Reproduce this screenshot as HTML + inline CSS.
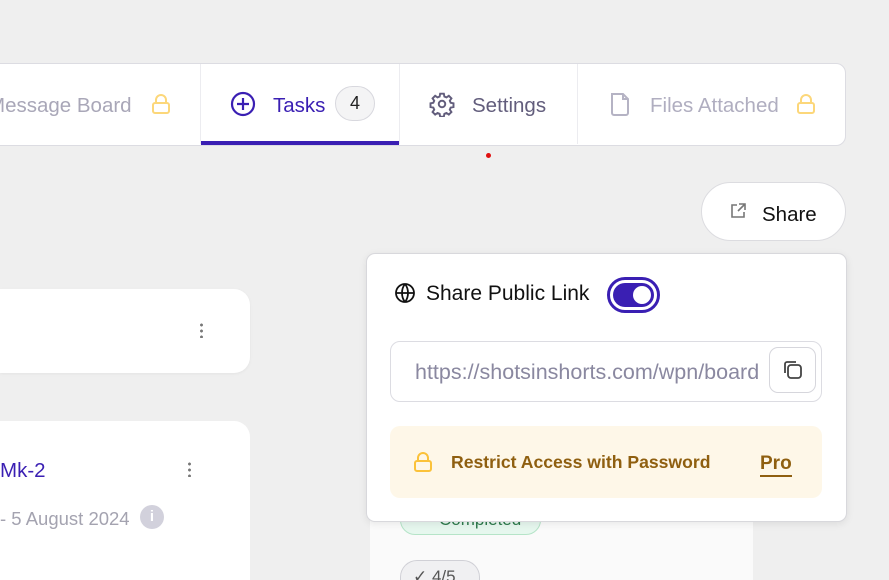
<!DOCTYPE html>
<html><head><style>
*{box-sizing:border-box;margin:0;padding:0}
html,body{width:889px;height:580px;overflow:hidden}
body{background:#efefef;font-family:"Liberation Sans",sans-serif;position:relative}
.abs{position:absolute}
.tabs{left:-20px;top:63px;width:866px;height:83px;background:#fff;border:1px solid #dcdce2;border-radius:10px}
.div{top:64px;width:1px;height:80px;background:#ececf0}
.t{font-size:20.5px;top:94px;white-space:nowrap}
</style></head><body>
<div class="abs tabs"></div>
<div class="abs div" style="left:200px"></div>
<div class="abs div" style="left:399px"></div>
<div class="abs div" style="left:577px"></div>
<div class="abs" style="left:201px;top:141px;width:198px;height:4px;background:#3a1fb3"></div>
<div class="abs t" style="left:-12px;color:#a9a7b8">Message Board</div>
<svg class="abs" style="left:150px;top:93px" width="22" height="22" viewBox="0 0 22 22" fill="none" stroke="#fcd77a" stroke-width="2"><rect x="3" y="10" width="16" height="10" rx="2"/><path d="M6 10V7a5 5 0 0 1 10 0v3"/></svg>
<svg class="abs" style="left:230px;top:91px" width="26" height="26" viewBox="0 0 26 26" fill="none" stroke="#3a1fb3" stroke-width="2.2"><circle cx="13" cy="13" r="11"/><path d="M13 7v12M7 13h12"/></svg>
<div class="abs t" style="left:273px;color:#3a1fb3">Tasks</div>
<div class="abs" style="left:335px;top:86px;width:40px;height:35px;border-radius:18px;background:#f4f4f5;border:1px solid #d8d8de;font-size:18px;text-align:center;line-height:33px;color:#222">4</div>
<svg class="abs" style="left:429px;top:91px" width="26" height="26" viewBox="0 0 24 24" fill="none" stroke="#625d7c" stroke-width="1.8"><path d="M10.3 2.5h3.4l.5 2.6 1.9.8 2.2-1.5 2.4 2.4-1.5 2.2.8 1.9 2.6.5v3.4l-2.6.5-.8 1.9 1.5 2.2-2.4 2.4-2.2-1.5-1.9.8-.5 2.6h-3.4l-.5-2.6-1.9-.8-2.2 1.5-2.4-2.4 1.5-2.2-.8-1.9-2.6-.5v-3.4l2.6-.5.8-1.9-1.5-2.2 2.4-2.4 2.2 1.5 1.9-.8z"/><circle cx="12" cy="12" r="3"/></svg>
<div class="abs t" style="left:472px;color:#625d7c">Settings</div>
<svg class="abs" style="left:608px;top:91px" width="24" height="26" viewBox="0 0 24 26" fill="none" stroke="#b5b3c4" stroke-width="2"><path d="M4 3h11l5 5v14a2 2 0 0 1-2 2H6a2 2 0 0 1-2-2V3z"/><path d="M15 3v5h5"/></svg>
<div class="abs t" style="left:650px;color:#b0aec0">Files Attached</div>
<svg class="abs" style="left:795px;top:93px" width="22" height="22" viewBox="0 0 22 22" fill="none" stroke="#fcd77a" stroke-width="2"><rect x="3" y="10" width="16" height="10" rx="2"/><path d="M6 10V7a5 5 0 0 1 10 0v3"/></svg>
<div class="abs" style="left:486px;top:153px;width:5px;height:5px;border-radius:50%;background:#e01010"></div>

<div class="abs" style="left:701px;top:182px;width:145px;height:59px;border-radius:30px;background:#fff;border:1px solid #dcdce0"></div>
<svg class="abs" style="left:729px;top:202px" width="18" height="18" viewBox="0 0 18 18" fill="none" stroke="#777" stroke-width="1.6"><path d="M8 3H3v12h12v-5"/><path d="M10 2h6v6M16 2l-7 7"/></svg>
<div class="abs" style="left:762px;top:203px;font-size:20.5px;color:#111">Share</div>

<div class="abs" style="left:0;top:289px;width:250px;height:84px;border-radius:0 16px 16px 0;background:#fff;box-shadow:0 1px 3px rgba(0,0,0,.05)"></div>
<div class="abs" style="left:200px;top:322px;width:3px;height:16px;background:radial-gradient(circle,#777 1.3px,transparent 1.6px) 0 0/3px 6px"></div>
<div class="abs" style="left:0;top:421px;width:250px;height:159px;border-radius:0 16px 0 0;background:#fff"></div>
<div class="abs" style="left:0;top:459px;font-size:20.5px;color:#3a1fb3">Mk-2</div>
<div class="abs" style="left:188px;top:461px;width:3px;height:16px;background:radial-gradient(circle,#777 1.3px,transparent 1.6px) 0 0/3px 6px"></div>
<div class="abs" style="left:0;top:508px;font-size:18.5px;color:#a4a3b0">- 5 August 2024</div>
<div class="abs" style="left:140px;top:505px;width:24px;height:24px;border-radius:50%;background:#d2d1dc;color:#fff;font-size:15px;font-weight:bold;text-align:center;line-height:24px">i</div>

<div class="abs" style="left:370px;top:400px;width:383px;height:180px;background:#fafafa"></div>
<div class="abs" style="left:400px;top:505px;width:141px;height:30px;border-radius:15px;background:#e6f7ee;border:1px solid #b5e4c8;font-size:17px;color:#2d7a4c;padding-left:38px;line-height:28px">Completed</div>
<div class="abs" style="left:400px;top:560px;width:80px;height:20px;border-radius:17px 17px 0 0;background:#f0f0f2;border:1px solid #d0d0d6;border-bottom:none;font-size:17px;color:#555;padding-left:12px;line-height:32px;overflow:hidden">✓ 4/5</div>

<div class="abs" style="left:366px;top:253px;width:481px;height:269px;background:#fff;border:1px solid #d8d8dc;border-radius:9px;box-shadow:0 2px 8px rgba(0,0,0,.08)"></div>
<svg class="abs" style="left:394px;top:282px" width="22" height="22" viewBox="0 0 22 22" fill="none" stroke="#111" stroke-width="1.8"><circle cx="11" cy="11" r="9"/><path d="M2 11h18M11 2c-4 5-4 13 0 18M11 2c4 5 4 13 0 18"/></svg>
<div class="abs" style="left:426px;top:282px;font-size:21px;color:#111">Share Public Link</div>
<div class="abs" style="left:607px;top:277px;width:53px;height:36px;border-radius:18px;border:3px solid #3a1fb3;padding:3px"><div style="width:100%;height:100%;border-radius:14px;background:#3a1fb3;position:relative"><div style="position:absolute;right:3px;top:3px;width:18px;height:18px;border-radius:50%;background:#fff"></div></div></div>
<div class="abs" style="left:390px;top:341px;width:432px;height:61px;border:1px solid #dcdce2;border-radius:10px"></div>
<div class="abs" style="left:415px;top:360px;font-size:21.5px;color:#8a88a0;white-space:nowrap;width:352px;overflow:hidden">https://shotsinshorts.com/wpn/board</div>
<div class="abs" style="left:769px;top:347px;width:47px;height:46px;border:1px solid #d6d6dc;border-radius:9px;background:#fff"></div>
<svg class="abs" style="left:782px;top:359px" width="22" height="22" viewBox="0 0 22 22" fill="none" stroke="#444" stroke-width="1.8"><rect x="6" y="6" width="13" height="13" rx="3"/><path d="M3 14V5a2 2 0 0 1 2-2h9"/></svg>
<div class="abs" style="left:390px;top:426px;width:432px;height:72px;border-radius:10px;background:#fef7e8"></div>
<svg class="abs" style="left:412px;top:451px" width="22" height="22" viewBox="0 0 22 22" fill="none" stroke="#fbc23a" stroke-width="2"><rect x="3" y="10" width="16" height="10" rx="2"/><path d="M6 10V7a5 5 0 0 1 10 0v3"/></svg>
<div class="abs" style="left:451px;top:452px;font-size:17.6px;font-weight:bold;color:#8f5f10">Restrict Access with Password</div>
<div class="abs" style="left:760px;top:453px;font-size:19px;font-weight:bold;color:#8f5f10;border-bottom:2px solid #8f5f10;line-height:22px">Pro</div>
</body></html>
